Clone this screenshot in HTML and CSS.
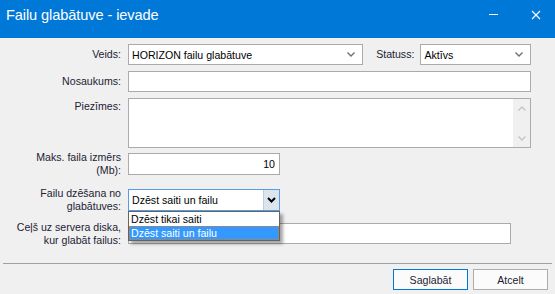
FILE: index.html
```html
<!DOCTYPE html>
<html lang="lv">
<head>
    <meta charset="UTF-8">
    <title>Failu glabātuve - ievade</title>
    <link rel="stylesheet" href="styles.css">
</head>
<body>
    <div class="window">
        <div class="titlebar">
            <span class="title">Failu glabātuve - ievade</span>
            <div class="caption">
                <span class="min-btn"></span>
                <svg class="close-btn" width="10" height="10" viewBox="0 0 10 10">
                    <path d="M1 1 L9 9 M9 1 L1 9" stroke="#fff" stroke-width="1.2" fill="none"/>
                </svg>
            </div>
        </div>

        <div class="form">
            <div class="row row-veids">
                <span class="lbl">Veids:</span>
                <div class="field select veids">
                    <span class="val">HORIZON failu glabātuve</span>
                    <svg class="chev" width="8" height="5" viewBox="0 0 8 5"><path d="M0.5 0.5 L4 4 L7.5 0.5" stroke="#707070" stroke-width="1.4" fill="none"/></svg>
                </div>
                <span class="lbl status-lbl">Statuss:</span>
                <div class="field select status">
                    <span class="val">Aktīvs</span>
                    <svg class="chev" width="8" height="5" viewBox="0 0 8 5"><path d="M0.5 0.5 L4 4 L7.5 0.5" stroke="#707070" stroke-width="1.4" fill="none"/></svg>
                </div>
            </div>

            <div class="row row-name">
                <span class="lbl">Nosaukums:</span>
                <div class="field grow"></div>
            </div>

            <div class="row row-notes">
                <span class="lbl top">Piezīmes:</span>
                <div class="field grow textarea">
                    <div class="scrollbar">
                        <svg width="8" height="5" viewBox="0 0 8 5"><path d="M0.5 4.5 L4 1 L7.5 4.5" stroke="#c4c4c4" stroke-width="1.4" fill="none"/></svg>
                        <svg width="8" height="5" viewBox="0 0 8 5"><path d="M0.5 0.5 L4 4 L7.5 0.5" stroke="#c4c4c4" stroke-width="1.4" fill="none"/></svg>
                    </div>
                </div>
            </div>

            <div class="row row-size">
                <span class="lbl">Maks. faila izmērs<br>(Mb):</span>
                <div class="field size num">10</div>
            </div>

            <div class="row row-delete">
                <span class="lbl">Failu dzēšana no<br>glabātuves:</span>
                <div class="field select focus size">
                    <span class="val">Dzēst saiti un failu</span>
                    <span class="drop-btn">
                        <svg width="9" height="6" viewBox="0 0 9 6"><path d="M1 1 L4.5 4.5 L8 1" stroke="#000" stroke-width="2" fill="none"/></svg>
                    </span>
                    <ul class="dropdown">
                        <li>Dzēst tikai saiti</li>
                        <li class="active">Dzēst saiti un failu</li>
                    </ul>
                </div>
            </div>

            <div class="row row-path">
                <span class="lbl">Ceļš uz servera diska,<br>kur glabāt failus:</span>
                <div class="field path"></div>
            </div>
        </div>

        <div class="sep"></div>

        <div class="actions">
            <button class="btn default">Saglabāt</button>
            <button class="btn">Atcelt</button>
        </div>
    </div>
</body>
</html>
```

FILE: styles.css
```css
* {
    box-sizing: border-box;
    margin: 0;
    padding: 0;
}
body {
    font-family: 'Liberation Sans', Arial, sans-serif;
    font-size: 10.6px;
    background: #f0f0f0;
    color: #000;
}
.window {
    width: 555px;
    height: 294px;
    overflow: hidden;
}
.titlebar {
    height: 38px;
    background: #0078d7;
    color: #fff;
    display: flex;
    justify-content: space-between;
    align-items: flex-start;
    padding-left: 6px;
}
.title {
    font-size: 14.6px;
    line-height: 30px;
    letter-spacing: -0.1px;
}
.caption {
    display: flex;
    align-items: center;
    height: 29px;
    gap: 33px;
    padding-right: 14px;
}
.min-btn {
    width: 9px;
    height: 1px;
    background: #fff;
}
.form {
    padding: 6px 24px 0 0;
}
.row {
    display: flex;
    align-items: center;
}
.lbl {
    width: 121px;
    margin-right: 7px;
    text-align: right;
    color: #1c1c34;
    line-height: 13px;
    white-space: nowrap;
    flex-shrink: 0;
}
.lbl.top {
    align-self: flex-start;
    padding-top: 2px;
}
.field {
    position: relative;
    height: 100%;
    background: #fff;
    border: 1px solid #ababab;
    display: flex;
    align-items: center;
    padding: 0 3px;
}
.grow {
    flex: 1;
}
.select {
    justify-content: space-between;
}
.chev {
    margin-right: 4px;
}
.row-veids {
    height: 21px;
}
.veids {
    width: 236px;
}
.status-lbl {
    width: auto;
    margin: 0 6px 0 13px;
}
.status {
    width: 111px;
}
.row-name {
    height: 21px;
    margin-top: 6px;
}
.row-notes {
    height: 50px;
    margin-top: 6px;
}
.textarea {
    justify-content: flex-end;
    padding: 0;
}
.scrollbar {
    width: 17px;
    height: 100%;
    background: #f0f0f0;
    display: flex;
    flex-direction: column;
    justify-content: space-between;
    align-items: center;
    padding: 7px 0 6px;
}
.row-size {
    height: 22px;
    margin-top: 5px;
}
.size {
    width: 152px;
}
.num {
    justify-content: flex-end;
    padding-right: 4px;
}
.row-delete {
    height: 22px;
    margin-top: 14px;
    position: relative;
    z-index: 2;
}
.focus {
    border-color: #569de5;
    padding-right: 0;
}
.drop-btn {
    width: 16px;
    height: 100%;
    background: #dce4ee;
    border-left: 1px solid #b9cde3;
    display: flex;
    align-items: center;
    justify-content: center;
}
.dropdown {
    position: absolute;
    top: 21px;
    left: -1px;
    width: 152px;
    list-style: none;
    background: #fff;
    border: 1px solid #646464;
    box-shadow: 3px 3px 3px rgba(0, 0, 0, 0.35);
}
.dropdown li {
    height: 14px;
    line-height: 14px;
    padding-left: 2px;
}
.dropdown li.active {
    background: #3399ff;
    color: #fff;
    outline: 1px dotted #e07a10;
    outline-offset: -1px;
}
.row-path {
    height: 21px;
    margin-top: 12px;
}
.path {
    width: 383px;
}
.sep {
    height: 1px;
    background: #a0a0a0;
    margin: 19px 3px 0;
}
.actions {
    display: flex;
    justify-content: flex-end;
    gap: 5px;
    padding: 5px 7px 0 0;
}
.btn {
    width: 75px;
    height: 21px;
    font-family: 'Liberation Sans', Arial, sans-serif;
    font-size: 10.6px;
    color: #1c1c34;
    background: #fbfbfb;
    border: 1px solid #adadad;
}
.btn.default {
    border-color: #0078d7;
}
```
